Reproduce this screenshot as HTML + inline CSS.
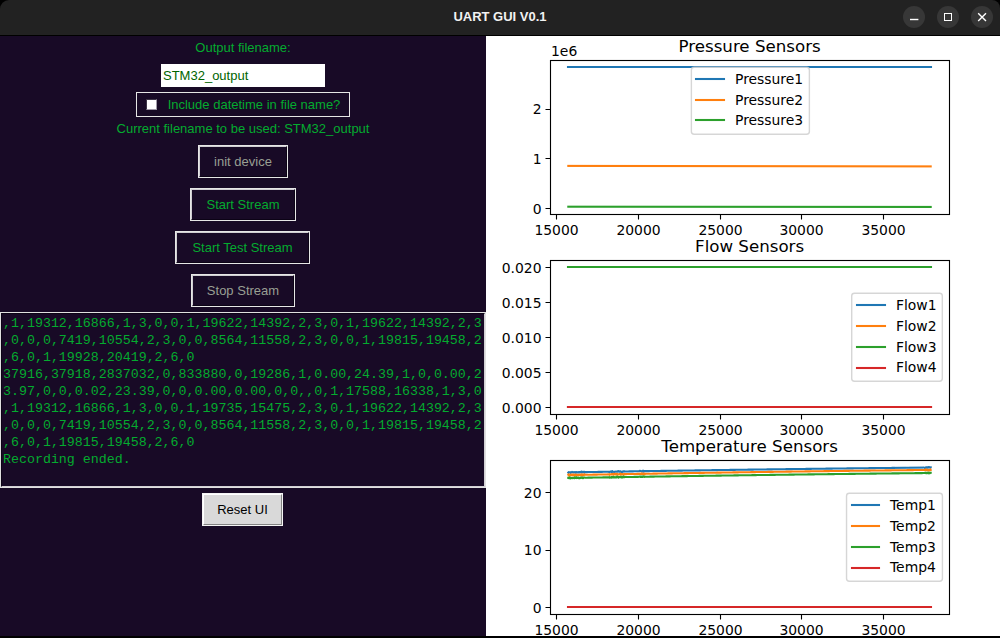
<!DOCTYPE html>
<html><head><meta charset="utf-8"><title>UART GUI V0.1</title>
<style>
html,body{margin:0;padding:0;background:#000;}
body{width:1000px;height:638px;overflow:hidden;position:relative;font-family:"Liberation Sans",sans-serif;font-size:13px;line-height:16px;color:#04ab2f;}
#win{position:absolute;left:0;top:0;width:1000px;height:638px;background:#000;overflow:hidden;}
#tb{position:absolute;left:0;top:0;width:1000px;height:35px;background:#222222;border-radius:9px 8px 0 0;}
.wb{position:absolute;top:6px;width:22px;height:22px;border-radius:11px;background:#373737;}
#left{position:absolute;left:0;top:36px;width:486px;height:600px;background:#180a26;}
#figw{position:absolute;left:486px;top:36px;width:514px;height:600px;background:#fff;}
.abs{position:absolute;box-sizing:border-box;}
.btn{position:absolute;box-sizing:border-box;border:1px solid #e6e6e6;}
.btn:after{content:"";position:absolute;left:0;top:0;right:0;bottom:0;border:1px solid;border-color:#cfcdd2 #0c0316 #0c0316 #cfcdd2;}
#ov{position:absolute;left:0;top:0;}
.t{position:absolute;white-space:pre;overflow:hidden;text-align:center;}
pre.t{margin:0;font-family:"Liberation Mono",monospace;font-size:13.3px;line-height:17px;text-align:left;}
</style></head><body>
<div id="win">
<div id="tb"><div class="t" style="left:440px;top:9px;width:120px;height:16px;color:#f2f2f2;font-weight:bold">UART GUI V0.1</div></div>
<div class="wb" style="left:903px"></div><div class="wb" style="left:937px"></div><div class="wb" style="left:971px"></div>
<div id="left"></div>
<div class="t" style="left:180px;top:40px;width:126px;height:16px">Output filename:</div>
<div class="abs" style="left:161px;top:64px;width:164px;height:23px;background:#fff;"><div class="t" style="left:2px;top:4px;width:120px;height:16px;text-align:left;color:#006400">STM32_output</div></div>
<div class="abs" style="left:136px;top:92px;width:214px;height:25px;border:1px solid #e6e6e6;"><div class="t" style="left:24px;top:4px;width:186px;height:16px">Include datetime in file name?</div></div>
<div class="abs" style="left:146px;top:99px;width:11px;height:11px;background:#fff;border:1px solid;border-color:#3c3446 #a09aa8 #a09aa8 #3c3446"></div>
<div class="t" style="left:100px;top:121px;width:286px;height:16px">Current filename to be used: STM32_output</div>
<div class="btn" style="left:198px;top:145px;width:90px;height:33px"></div><div class="t" style="left:198px;top:154px;width:90px;height:16px;color:#999f93">init device</div>
<div class="btn" style="left:190px;top:188px;width:106px;height:33px"></div><div class="t" style="left:190px;top:197px;width:106px;height:16px">Start Stream</div>
<div class="btn" style="left:175px;top:231px;width:135px;height:33px"></div><div class="t" style="left:175px;top:240px;width:135px;height:16px">Start Test Stream</div>
<div class="btn" style="left:191px;top:274px;width:104px;height:33px"></div><div class="t" style="left:191px;top:283px;width:104px;height:16px;color:#999f93">Stop Stream</div>
<div class="abs" style="left:0;top:312px;width:486px;height:176px;border:1px solid #e0e0e0;"><div class="abs" style="left:0;top:0;right:0;bottom:0;border:1px solid;border-color:#0c0316 #d2d0d4 #d2d0d4 #0c0316"></div><pre class="t" style="left:2px;top:2px;width:480px;height:170px">,1,19312,16866,1,3,0,0,1,19622,14392,2,3,0,1,19622,14392,2,3
,0,0,0,7419,10554,2,3,0,0,8564,11558,2,3,0,0,1,19815,19458,2
,6,0,1,19928,20419,2,6,0
37916,37918,2837032,0,833880,0,19286,1,0.00,24.39,1,0,0.00,2
3.97,0,0,0.02,23.39,0,0,0.00,0.00,0,0,,0,1,17588,16338,1,3,0
,1,19312,16866,1,3,0,0,1,19735,15475,2,3,0,1,19622,14392,2,3
,0,0,0,7419,10554,2,3,0,0,8564,11558,2,3,0,0,1,19815,19458,2
,6,0,1,19815,19458,2,6,0
Recording ended.</pre></div>
<div class="abs" style="left:202px;top:493px;width:81px;height:33px;background:#d9d9d9;border:1px solid #f4f4f4;"><div class="abs" style="left:0;top:0;right:0;bottom:0;border:1px solid;border-color:#fff #828282 #828282 #fff"></div><div class="t" style="left:0px;top:8px;width:79px;height:16px;color:#000">Reset UI</div></div>
<div id="figw"></div>
<svg id="ov" width="1000" height="638" viewBox="0 0 1000 638">
<g stroke="#fff" fill="none">
<path d="M910 19.5H918.4" stroke-width="1.4"/>
<rect x="944.5" y="13.5" width="7" height="7" stroke-width="1"/>
<path d="M978.2 13.2L986 21M986 13.2L978.2 21" stroke-width="1.4"/>
</g>
<clipPath id="c0"><rect x="550.29" y="60.25" width="398.58" height="154"/></clipPath>
<g clip-path="url(#c0)" fill="none" stroke-width="2.08" stroke-linecap="square" stroke-linejoin="round"><path d="M568 67H931" stroke="#1f77b4"/><g stroke="none"><linearGradient id="gl0_1_164" gradientUnits="userSpaceOnUse" x1="567.26" y1="0" x2="931.74" y2="0"><stop offset="0.00000" stop-color="#ff7f0e" stop-opacity="0.143"/><stop offset="0.28457" stop-color="#ff7f0e" stop-opacity="0.000"/><stop offset="1.00000" stop-color="#ff7f0e" stop-opacity="0.000"/></linearGradient><rect x="567.26" y="164" width="364.48" height="1" fill="url(#gl0_1_164)"/><linearGradient id="gl0_1_165" gradientUnits="userSpaceOnUse" x1="567.26" y1="0" x2="931.74" y2="0"><stop offset="0.00000" stop-color="#ff7f0e" stop-opacity="1.000"/><stop offset="0.28457" stop-color="#ff7f0e" stop-opacity="1.000"/><stop offset="1.00000" stop-color="#ff7f0e" stop-opacity="0.640"/></linearGradient><rect x="567.26" y="165" width="364.48" height="1" fill="url(#gl0_1_165)"/><linearGradient id="gl0_1_166" gradientUnits="userSpaceOnUse" x1="567.26" y1="0" x2="931.74" y2="0"><stop offset="0.00000" stop-color="#ff7f0e" stop-opacity="0.940"/><stop offset="0.11886" stop-color="#ff7f0e" stop-opacity="1.000"/><stop offset="1.00000" stop-color="#ff7f0e" stop-opacity="1.000"/></linearGradient><rect x="567.26" y="166" width="364.48" height="1" fill="url(#gl0_1_166)"/><linearGradient id="gl0_1_167" gradientUnits="userSpaceOnUse" x1="567.26" y1="0" x2="931.74" y2="0"><stop offset="0.00000" stop-color="#ff7f0e" stop-opacity="0.000"/><stop offset="0.11886" stop-color="#ff7f0e" stop-opacity="0.000"/><stop offset="1.00000" stop-color="#ff7f0e" stop-opacity="0.443"/></linearGradient><rect x="567.26" y="167" width="364.48" height="1" fill="url(#gl0_1_167)"/></g><g stroke="none"><linearGradient id="gl0_2_205" gradientUnits="userSpaceOnUse" x1="567.26" y1="0" x2="931.74" y2="0"><stop offset="0.00000" stop-color="#2ca02c" stop-opacity="0.342"/><stop offset="1.00000" stop-color="#2ca02c" stop-opacity="0.091"/></linearGradient><rect x="567.26" y="205" width="364.48" height="1" fill="url(#gl0_2_205)"/><rect x="567.26" y="206" width="364.48" height="1" fill="#2ca02c" fill-opacity="1.000"/><linearGradient id="gl0_2_207" gradientUnits="userSpaceOnUse" x1="567.26" y1="0" x2="931.74" y2="0"><stop offset="0.00000" stop-color="#2ca02c" stop-opacity="0.741"/><stop offset="1.00000" stop-color="#2ca02c" stop-opacity="0.992"/></linearGradient><rect x="567.26" y="207" width="364.48" height="1" fill="url(#gl0_2_207)"/></g></g>
<path d="M556.5 214.5v5M638.5 214.5v5M720.5 214.5v5M801.5 214.5v5M883.5 214.5v5M550.5 208.5h-5M550.5 158.5h-5M550.5 109.5h-5" stroke="#000" stroke-width="1.11" fill="none"/>
<rect x="550.5" y="60.5" width="399" height="154" fill="none" stroke="#000" stroke-width="1.11"/>
<rect x="691.38" y="67.19" width="118" height="67" rx="2.78" ry="2.78" fill="#fff" fill-opacity="0.8" stroke="#ccc" stroke-opacity="0.8" stroke-width="1.39"/>
<g fill="none" stroke-width="2.08" stroke-linecap="square"><path d="M696 79H724" stroke="#1f77b4"/><path d="M696 100H724" stroke="#ff7f0e"/><path d="M696 120H724" stroke="#2ca02c"/></g>
<clipPath id="c1"><rect x="550.29" y="260.25" width="398.58" height="154"/></clipPath>
<g clip-path="url(#c1)" fill="none" stroke-width="2.08" stroke-linecap="square" stroke-linejoin="round"><path d="M568 407H931" stroke="#1f77b4"/><path d="M568 407H931" stroke="#ff7f0e"/><path d="M568 267H931" stroke="#2ca02c"/><path d="M568 407H931" stroke="#d62728"/></g>
<path d="M556.5 414.5v5M638.5 414.5v5M720.5 414.5v5M801.5 414.5v5M883.5 414.5v5M550.5 407.5h-5M550.5 372.5h-5M550.5 337.5h-5M550.5 302.5h-5M550.5 267.5h-5" stroke="#000" stroke-width="1.11" fill="none"/>
<rect x="550.5" y="260.5" width="399" height="154" fill="none" stroke="#000" stroke-width="1.11"/>
<rect x="851.7" y="293.28" width="90.62" height="87.94" rx="2.78" ry="2.78" fill="#fff" fill-opacity="0.8" stroke="#ccc" stroke-opacity="0.8" stroke-width="1.39"/>
<g fill="none" stroke-width="2.08" stroke-linecap="square"><path d="M857 305H885" stroke="#1f77b4"/><path d="M857 326H885" stroke="#ff7f0e"/><path d="M857 347H885" stroke="#2ca02c"/><path d="M857 368H885" stroke="#d62728"/></g>
<clipPath id="c2"><rect x="550.29" y="460.25" width="398.58" height="154"/></clipPath>
<g clip-path="url(#c2)" fill="none" stroke-width="2.08" stroke-linecap="square" stroke-linejoin="round"><path d="M567.63 471.77 568.55 472.87 568.8 472.22 569.05 472.22 569.3 472.2 569.55 472.2 569.8 472.19 570.05 472.2 570.3 472.2 570.55 472.19 570.8 472.83 571.05 472.18 571.3 472.18 571.55 472.18 571.8 472.16 572.05 471.82 572.3 472.16 572.55 472.15 572.8 472.49 573.05 472.49 573.3 472.49 573.55 472.44 573.8 472.14 574.05 472.47 574.3 472.47 574.55 472.46 574.8 472.12 575.05 472.46 575.3 472.45 575.55 472.45 575.8 472.74 576.05 472.1 576.3 472.44 576.55 472.09 576.8 472.09 577.05 472.42 577.3 472.38 577.55 472.41 577.8 472.41 578.05 472.07 578.3 472.06 578.55 472.4 578.8 472.39 579.05 472.05 579.3 472.39 579.55 472.04 579.8 472.38 580.05 472.33 580.3 472.03 580.55 472.02 580.8 472.02 581.05 472.36 581.3 471.66 581.55 472.35 581.8 472.34 582.05 471.65 582.3 472 582.55 471.99 582.8 471.98 583.05 472.32 583.3 472.32 583.55 471.97 583.8 472.31 584.05 471.96 584.3 472.3 584.55 471.96 584.8 472.29 585.05 472.12 586.05 472.1 587.05 472.09 588.05 472.07 589.05 472.05 590.05 472.04 591.05 472.02 592.05 472 593.05 471.99 594.05 471.97 595.05 471.95 596.05 471.94 597.05 471.92 598.05 471.91 599.05 471.89 600.05 471.87 601.05 471.86 602.05 471.84 603.05 471.82 604.05 471.81 605.05 471.79 606.05 471.78 607.05 471.76 608.05 471.74 609.05 471.9 609.3 472.19 609.55 471.89 609.8 471.88 610.05 471.84 610.3 471.54 610.55 471.52 610.8 471.53 611.05 471.82 611.3 471.52 611.55 471.86 611.8 472.15 612.05 471.51 612.3 471.15 612.55 471.84 612.8 471.5 613.05 471.83 613.3 471.83 613.55 471.82 613.8 471.82 614.05 472.12 614.3 471.81 614.55 471.81 614.8 471.8 615.05 471.45 615.3 471.46 615.55 471.79 615.8 471.79 616.05 471.78 616.3 471.78 616.55 471.44 616.8 471.43 617.05 471.43 617.3 471.42 617.55 471.76 617.8 471.41 618.05 471.41 618.3 471.06 618.55 471.39 618.8 471.74 619.05 471.4 619.3 471.39 619.55 471.69 619.8 471.68 620.05 471.72 620.3 471.37 620.55 471.37 620.8 471.37 621.05 471.7 621.3 472 621.55 471.7 621.8 471.69 622.05 471.69 622.3 471.98 622.55 471.68 622.8 471.68 623.05 471.33 623.3 471.33 623.55 471.31 623.8 471.66 624.05 471.31 624.3 471.31 624.55 471.3 624.8 471.3 625.05 471.47 626.05 471.46 627.05 471.44 628.05 471.42 629.05 471.41 630.05 471.39 631.05 471.38 632.05 471.36 633.05 471.34 634.05 471.33 635.05 471.31 636.05 471.3 637.05 471.28 638.05 471.27 639.05 471.25 640.05 470.72 640.3 471.06 640.55 471.06 640.8 471.05 641.05 471.05 641.3 471.04 641.55 471.38 641.8 471.38 642.05 471.37 642.3 471.37 642.55 471.03 642.8 471.02 643.05 470.67 643.3 471.35 643.55 471.65 643.8 471.35 644.05 470.99 644.3 470.99 644.55 470.99 644.8 470.99 645.05 471.16 646.05 471.14 647.05 471.13 648.05 471.11 649.05 471.1 650.05 471.08 651.05 471.07 652.05 471.05 653.05 471.03 654.05 471.02 655.05 471 656.05 470.99 657.05 470.97 658.05 470.96 659.05 470.94 660.05 470.93 661.05 470.91 662.05 470.9 663.05 470.88 664.05 470.87 665.05 470.85 666.05 470.84 667.05 470.82 668.05 470.81 669.05 470.79 670.05 470.78 671.05 470.76 672.05 470.75 673.05 470.73 674.05 470.72 675.05 470.7 676.05 470.69 677.05 470.67 678.05 470.66 679.05 470.64 680.05 470.63 681.05 470.61 682.05 470.6 683.05 470.58 684.05 470.57 685.05 470.55 686.05 470.54 687.05 470.52 688.05 470.51 689.05 470.5 690.05 470.48 691.05 470.47 692.05 470.45 693.05 470.44 694.05 470.42 695.05 470.41 696.05 470.39 697.05 470.38 698.05 470.36 699.05 470.35 700.05 470.34 701.05 470.32 702.05 470.31 703.05 470.29 704.05 470.28 705.05 470.26 706.05 470.25 707.05 470.23 708.05 470.22 709.05 470.21 710.05 470.19 711.05 470.18 712.05 470.16 713.05 470.15 714.05 470.13 715.05 470.12 716.05 470.11 717.05 470.09 718.05 470.08 719.05 470.06 720.05 470.05 721.05 470.04 722.05 470.02 723.05 470.01 724.05 469.99 725.05 469.98 726.05 469.97 727.05 469.95 728.05 469.94 729.05 469.92 730.05 469.91 731.05 469.9 732.05 469.88 733.05 469.87 734.05 469.85 735.05 469.84 736.05 469.83 737.05 469.81 738.05 469.8 739.05 469.79 740.05 469.77 741.05 469.76 742.05 469.74 743.05 469.73 744.05 469.72 745.05 469.7 746.05 469.69 747.05 469.68 748.05 469.66 749.05 469.65 750.05 469.64 751.05 469.62 752.05 469.61 753.05 469.6 754.05 469.58 755.05 469.57 756.05 469.56 757.05 469.54 758.05 469.53 759.05 469.52 760.05 469.5 761.05 469.49 762.05 469.48 763.05 469.46 764.05 469.45 765.05 469.44 766.05 469.42 767.05 469.41 768.05 469.4 769.05 469.38 770.05 469.37 771.05 469.36 772.05 469.34 773.05 469.33 774.05 469.32 775.05 469.3 776.05 469.29 777.05 469.28 778.05 469.27 779.05 469.25 780.05 469.24 781.05 469.23 782.05 469.21 783.05 469.2 784.05 469.19 785.05 469.17 786.05 469.16 787.05 469.15 788.05 469.14 789.05 469.12 790.05 469.11 791.05 469.1 792.05 469.09 793.05 469.07 794.05 469.06 795.05 469.05 796.05 469.03 797.05 469.02 798.05 469.01 799.05 469 800.05 468.98 801.05 468.97 802.05 468.96 803.05 468.95 804.05 468.93 805.05 468.92 806.05 468.91 807.05 468.9 808.05 468.88 809.05 468.87 810.05 468.86 811.05 468.85 812.05 468.83 813.05 468.82 814.05 468.81 815.05 468.8 816.05 468.79 817.05 468.77 818.05 468.76 819.05 468.75 820.05 468.74 821.05 468.72 822.05 468.71 823.05 468.7 824.05 468.69 825.05 468.68 826.05 468.66 827.05 468.65 828.05 468.64 829.05 468.63 830.05 468.62 831.05 468.6 832.05 468.59 833.05 468.58 834.05 468.57 835.05 468.56 836.05 468.54 837.05 468.53 838.05 468.52 839.05 468.51 840.05 468.5 841.05 468.48 842.05 468.47 843.05 468.46 844.05 468.45 845.05 468.44 846.05 468.43 847.05 468.41 848.05 468.4 849.05 468.39 850.05 468.38 851.05 468.37 852.05 468.36 853.05 468.34 854.05 468.33 855.05 468.32 856.05 468.31 857.05 468.3 858.05 468.29 859.05 468.27 860.05 468.26 861.05 468.25 862.05 468.24 863.05 468.23 864.05 468.22 865.05 468.21 866.05 468.19 867.05 468.18 868.05 468.17 869.05 468.16 870.05 468.15 871.05 468.14 872.05 468.13 873.05 468.12 874.05 468.1 875.05 468.09 876.05 468.08 877.05 468.07 878.05 468.06 879.05 468.05 880.05 468.04 881.05 468.03 882.05 468.02 883.05 468 884.05 467.99 885.05 467.98 886.05 467.97 887.05 467.96 888.05 467.95 889.05 467.94 890.05 467.93 891.05 467.92 892.05 467.91 893.05 467.9 894.05 467.88 895 467.87" stroke="#1f77b4" stroke-linecap="butt"/><g stroke="none"><linearGradient id="gm2_0_0_466" gradientUnits="userSpaceOnUse" x1="895" y1="0" x2="906" y2="0"><stop offset="0.00000" stop-color="#1f77b4" stop-opacity="0.171"/><stop offset="1.00000" stop-color="#1f77b4" stop-opacity="0.281"/></linearGradient><rect x="895" y="466" width="11" height="1" fill="url(#gm2_0_0_466)"/><rect x="895" y="467" width="11" height="1" fill="#1f77b4" fill-opacity="1.000"/><linearGradient id="gm2_0_0_468" gradientUnits="userSpaceOnUse" x1="895" y1="0" x2="906" y2="0"><stop offset="0.00000" stop-color="#1f77b4" stop-opacity="0.912"/><stop offset="1.00000" stop-color="#1f77b4" stop-opacity="0.802"/></linearGradient><rect x="895" y="468" width="11" height="1" fill="url(#gm2_0_0_468)"/></g><path d="M906 467.76 907.05 467.75 908.05 467.73 909 467.72" stroke="#1f77b4" stroke-linecap="butt"/><g stroke="none"><linearGradient id="gm2_0_1_466" gradientUnits="userSpaceOnUse" x1="909" y1="0" x2="923" y2="0"><stop offset="0.00000" stop-color="#1f77b4" stop-opacity="0.321"/><stop offset="1.00000" stop-color="#1f77b4" stop-opacity="0.461"/></linearGradient><rect x="909" y="466" width="14" height="1" fill="url(#gm2_0_1_466)"/><rect x="909" y="467" width="14" height="1" fill="#1f77b4" fill-opacity="1.000"/><linearGradient id="gm2_0_1_468" gradientUnits="userSpaceOnUse" x1="909" y1="0" x2="923" y2="0"><stop offset="0.00000" stop-color="#1f77b4" stop-opacity="0.762"/><stop offset="1.00000" stop-color="#1f77b4" stop-opacity="0.622"/></linearGradient><rect x="909" y="468" width="14" height="1" fill="url(#gm2_0_1_468)"/></g><path d="M923 467.58 924.05 467.57 925.05 468.03 925.3 467.73 925.55 467.72 925.8 467.38 926.05 467.72 926.3 467.36 926.55 467.36 926.8 467.37 927.05 467.71 927.3 467.36 927.55 467.66 927.8 467.7 928.05 467.7 928.3 467 928.55 467.35 928.8 467.35 929.05 467.35 929.3 466.99 929.55 467.34 929.8 467.34 930.05 467.68 930.3 467.63 930.55 467.33 931.74 467.33" stroke="#1f77b4" stroke-linecap="butt"/><path d="M567.95 473.6 568.55 475.27 568.8 475.56 569.05 475.26 569.3 475.21 569.55 475.55 569.8 474.55 570.05 474.9 570.3 475.23 570.55 475.23 570.8 475.23 571.05 474.88 571.3 474.53 571.55 474.87 571.8 475.21 572.05 474.86 572.3 475.2 572.55 475.19 572.8 474.5 573.05 474.85 573.3 474.49 573.55 475.18 573.8 474.83 574.05 474.83 574.3 474.81 574.55 475.46 574.8 474.81 575.05 474.81 575.3 475.14 575.55 474.45 575.8 474.45 576.05 474.79 576.3 475.43 576.55 475.12 576.8 474.78 577.05 474.77 577.3 475.11 577.55 475.1 577.8 474.76 578.05 475.1 578.3 474.75 578.55 475.09 578.8 474.74 579.05 475.08 579.3 475.03 579.55 475.07 579.8 474.73 580.05 475.06 580.3 475.06 580.55 474.71 580.8 475.05 581.05 474.7 581.3 475 581.55 474.69 581.8 475.03 582.05 474.34 582.3 475.02 582.55 474.68 582.8 475.31 583.05 475.01 583.3 474.66 583.55 475 583.8 474.99 584.05 474.99 584.3 474.99 584.55 474.29 584.8 474.64 585.05 474.8 586.05 474.78 587.05 474.77 588.05 474.75 589.05 474.73 590.05 474.71 591.05 474.7 592.05 474.68 593.05 474.66 594.05 474.64 595.05 474.63 596.05 474.61 597.05 474.59 598.05 474.58 599.05 474.56 600.05 474.54 601.05 474.52 602.05 474.51 603.05 474.49 604.05 474.47 605.05 474.45 606.05 474.44 607.05 474.42 608.05 474.4 609.05 474.22 609.3 474.2 609.55 474.85 609.8 474.19 610.05 474.2 610.3 474.53 610.55 474.49 610.8 474.53 611.05 474.52 611.3 474.18 611.55 474.47 611.8 474.51 612.05 474.16 612.3 474.5 612.55 474.16 612.8 474.49 613.05 474.15 613.3 473.79 613.55 474.78 613.8 474.47 614.05 474.13 614.3 474.12 614.55 474.12 614.8 474.12 615.05 473.76 615.3 474.45 615.55 474.44 615.8 473.75 616.05 474.1 616.3 474.09 616.55 474.09 616.8 474.42 617.05 473.73 617.3 474.71 617.55 474.07 617.8 474.07 618.05 474.4 618.3 474.4 618.55 474.35 618.8 474.39 619.05 474.39 619.3 474.04 619.55 474.04 619.8 474.02 620.05 474.37 620.3 474.01 620.55 474.66 620.8 473.67 621.05 474.01 621.3 474.35 621.55 474.34 621.8 474 622.05 473.99 622.3 474.33 622.55 474.33 622.8 473.98 623.05 474.62 623.3 474.61 623.55 474.61 623.8 473.97 624.05 473.96 624.3 474.3 624.55 473.95 624.8 473.95 625.05 474.11 626.05 474.1 627.05 474.08 628.05 474.06 629.05 474.05 630.05 474.03 631.05 474.01 632.05 474 633.05 473.98 634.05 473.96 635.05 473.95 636.05 473.93 637.05 473.91 638.05 473.9 639.05 473.88 640.05 474.03 640.3 473.69 640.55 474.03 640.8 473.67 641.05 473.68 641.3 474.01 641.55 473.67 641.8 473.97 642.05 473.66 642.3 474 642.55 473.65 642.8 473.65 643.05 473.98 643.3 473.94 643.55 474.28 643.8 473.97 644.05 473.63 644.3 473.96 644.55 473.62 644.8 474.26 645.05 473.78 646.05 473.77 647.05 473.75 648.05 473.73 649.05 473.72 650.05 473.7 651.05 473.68 652.05 473.67 653.05 473.65 654.05 473.63 655.05 473.62 656.05 473.6 657.05 473.59 658.05 473.57 659.05 473.55 660.05 473.54 661.05 473.52 662.05 473.51 663.05 473.49 664.05 473.47 665.05 473.46 666.05 473.44 667.05 473.43 668.05 473.41 669.05 473.39 670.05 473.38 671.05 473.36 672.05 473.35 673.05 473.33 674.05 473.31 675.05 473.3 676.05 473.28 677.05 473.27 678.05 473.25 679.05 473.23 680.05 473.22 681.05 473.2 682.05 473.19 683.05 473.17 684.05 473.16 685.05 473.14 686.05 473.13 687.05 473.11 688.05 473.09 689.05 473.08 690.05 473.06 691.05 473.05 692.05 473.03 693.05 473.02 694.05 473 695.05 472.99 696.05 472.97 697.05 472.95 698.05 472.94 699.05 472.92 700.05 472.91 701.05 472.89 702.05 472.88 703.05 472.86 704.05 472.85 705.05 472.83 706.05 472.82 707.05 472.8 708.05 472.79 709.05 472.77 710.05 472.76 711.05 472.74 712.05 472.73 713.05 472.71 714.05 472.7 715.05 472.68 716.05 472.67 717.05 472.65 718.05 472.64 719.05 472.62 720.05 472.61 721.05 472.59 722.05 472.58 723.05 472.56 724.05 472.55 725.05 472.53 726.05 472.52 727.05 472.5 728.05 472.49 729.05 472.47 730.05 472.46 731.05 472.44 732.05 472.43 733.05 472.41 734.05 472.4 735.05 472.38 736.05 472.37 737.05 472.36 738.05 472.34 739.05 472.33 740.05 472.31 741.05 472.3 742.05 472.28 743.05 472.27 744.05 472.25 745.05 472.24 746.05 472.22 747.05 472.21 748.05 472.2 749.05 472.18 750.05 472.17 751.05 472.15 752.05 472.14 753.05 472.12 754.05 472.11 755.05 472.1 756.05 472.08 757.05 472.07 758.05 472.05 759.05 472.04 760.05 472.02 761.05 472.01 762.05 472 763.05 471.98 764.05 471.97 765.05 471.95 766.05 471.94 767.05 471.93 768.05 471.91 769.05 471.9 770.05 471.88 771.05 471.87 772.05 471.86 773.05 471.84 774.05 471.83 775.05 471.81 776.05 471.8 777.05 471.79 778.05 471.77 779.05 471.76 780.05 471.75 781.05 471.73 782.05 471.72 783.05 471.7 784.05 471.69 785.05 471.68 786.05 471.66 787.05 471.65 788.05 471.64 789.05 471.62 790.05 471.61 791.05 471.6 792.05 471.58 793.05 471.57 794.05 471.56 795.05 471.54 796.05 471.53 797.05 471.52 798.05 471.5 799.05 471.49 800.05 471.47 801.05 471.46 802.05 471.45 803.05 471.44 804.05 471.42 805.05 471.41 806.05 471.4 807.05 471.38 808.05 471.37 809.05 471.36 810.05 471.34 811.05 471.33 812.05 471.32 813.05 471.3 814.05 471.29 815.05 471.28 816.05 471.26 817.05 471.25 818.05 471.24 819.05 471.22 820.05 471.21 821.05 471.2 822.05 471.19 823.05 471.17 824.05 471.16 825.05 471.15 826.05 471.13 827.05 471.12 828.05 471.11 829.05 471.1 830.05 471.08 831.05 471.07 832.05 471.06 833.05 471.05 834.05 471.03 835.05 471.02 836.05 471.01 837.05 470.99 838.05 470.98 839.05 470.97 840.05 470.96 841.05 470.94 842.05 470.93 843.05 470.92 844.05 470.91 845.05 470.89 846.05 470.88 847.05 470.87 848.05 470.86 849.05 470.84 850.05 470.83 851.05 470.82 852.05 470.81 853.05 470.8 854.05 470.78 855.05 470.77 856.05 470.76 857.05 470.75 858.05 470.73 859.05 470.72 860.05 470.71 861.05 470.7 862.05 470.69 863.05 470.67 864.05 470.66 865.05 470.65 866.05 470.64 867.05 470.63 868.05 470.61 869.05 470.6 870.05 470.59 871.05 470.58 872.05 470.57 873.05 470.55 874.05 470.54 875.05 470.53 876.05 470.52 877.05 470.51 878.05 470.49 879.05 470.48 880.05 470.47 881.05 470.46 882.05 470.45 883.05 470.44 884.05 470.42 885.05 470.41 886.05 470.4 887.05 470.39 888.05 470.38 889.05 470.37 890.05 470.35 891.05 470.34 892.05 470.33 893.05 470.32 894.05 470.31 895.05 470.3 896.05 470.28 897.05 470.27 898.05 470.26 899.05 470.25 900.05 470.24 901.05 470.23 902.05 470.22 903.05 470.21 904.05 470.19 905.05 470.18 906.05 470.17 907.05 470.16 908.05 470.15 909.05 470.14 910.05 470.13 911.05 470.12 912.05 470.1 913.05 470.09 914.05 470.08 915.05 470.07 916.05 470.06 917.05 470.05 918.05 470.04 919.05 470.03 920.05 470.02 921.05 470 922.05 469.99 923.05 469.98 924.05 469.97 925.05 469.79 925.3 470.13 925.55 469.79 925.8 469.43 926.05 470.12 926.3 470.12 926.55 470.11 926.8 470.07 927.05 469.76 927.3 470.11 927.55 470.1 927.8 469.76 928.05 470.1 928.3 470.4 928.55 470.09 928.8 470.09 929.05 469.75 929.3 470.09 929.55 470.38 929.8 469.74 930.05 470.38 930.3 469.73 930.55 469.38 930.92 471.09" stroke="#ff7f0e" stroke-linecap="butt"/><path d="M567.26 477.87 568.55 477.82 568.8 478.16 569.05 478.16 569.3 477.81 569.55 477.81 569.8 477.45 570.05 477.8 570.3 478.44 570.55 477.78 570.8 478.13 571.05 478.12 571.3 478.12 571.55 477.77 571.8 477.77 572.05 477.77 572.3 477.76 572.55 478.1 572.8 478.09 573.05 477.75 573.3 477.74 573.55 477.73 573.8 477.74 574.05 478.07 574.3 477.73 574.55 477.37 574.8 478.06 575.05 477.71 575.3 477.71 575.55 477.71 575.8 477.35 576.05 477.7 576.3 478.03 576.55 477.34 576.8 477.68 577.05 477.68 577.3 478.02 577.55 478.01 577.8 477.67 578.05 477.96 578.3 477.65 578.55 477.99 578.8 477.99 579.05 478.29 579.3 477.98 579.55 477.98 579.8 478.27 580.05 477.62 580.3 477.62 580.55 477.96 580.8 477.62 581.05 477.95 581.3 477.91 581.55 477.6 581.8 477.25 582.05 477.59 582.3 477.93 582.55 477.59 582.8 478.22 583.05 477.92 583.3 477.57 583.55 477.91 583.8 477.56 584.05 477.56 584.3 477.56 584.55 477.55 584.8 477.55 585.05 477.71 586.05 477.7 587.05 477.68 588.05 477.66 589.05 477.65 590.05 477.63 591.05 477.61 592.05 477.6 593.05 477.58 594.05 477.56 595.05 477.55 596.05 477.53 597.05 477.51 598.05 477.5 599.05 477.48 600.05 477.46 601.05 477.45 602.05 477.43 603.05 477.41 604.05 477.4 605.05 477.38 606.05 477.36 607.05 477.35 608.05 477.33 609.05 477.48 609.3 477.14 609.55 477.47 609.8 477.77 610.05 477.47 610.3 477.46 610.55 477.46 610.8 477.45 611.05 477.1 611.3 477.75 611.55 477.1 611.8 477.1 612.05 477.39 612.3 477.43 612.55 477.43 612.8 477.42 613.05 476.73 613.3 477.07 613.55 477.41 613.8 477.07 614.05 477.06 614.3 477.4 614.55 477.39 614.8 477.05 615.05 477.38 615.3 477.34 615.55 477.38 615.8 477.33 616.05 477.03 616.3 477.36 616.55 476.67 616.8 477.36 617.05 477.01 617.3 476.66 617.55 477 617.8 476.99 618.05 477.34 618.3 477.63 618.55 476.99 618.8 476.98 619.05 476.98 619.3 476.98 619.55 476.97 619.8 477.31 620.05 477.3 620.3 476.96 620.55 477.29 620.8 477.29 621.05 477.29 621.3 476.94 621.55 477.24 621.8 476.93 622.05 477.57 622.3 477.27 622.55 477.26 622.8 477.26 623.05 477.25 623.3 476.56 623.55 477.25 623.8 477.24 624.05 477.24 624.3 477.23 624.55 477.23 624.8 476.89 625.05 477.05 626.05 477.04 627.05 477.02 628.05 477 629.05 476.99 630.05 476.97 631.05 476.96 632.05 476.94 633.05 476.92 634.05 476.91 635.05 476.89 636.05 476.88 637.05 476.86 638.05 476.84 639.05 476.83 640.05 476.64 640.3 476.98 640.55 476.63 640.8 476.63 641.05 476.97 641.3 476.62 641.55 476.62 641.8 476.95 642.05 476.61 642.3 476.95 642.55 476.6 642.8 476.94 643.05 476.24 643.3 476.59 643.55 476.59 643.8 476.58 644.05 476.58 644.3 476.57 644.55 476.91 644.8 476.57 645.05 476.73 646.05 476.72 647.05 476.7 648.05 476.69 649.05 476.67 650.05 476.65 651.05 476.64 652.05 476.62 653.05 476.61 654.05 476.59 655.05 476.58 656.05 476.56 657.05 476.54 658.05 476.53 659.05 476.51 660.05 476.5 661.05 476.48 662.05 476.47 663.05 476.45 664.05 476.44 665.05 476.42 666.05 476.41 667.05 476.39 668.05 476.37 669.05 476.36 670.05 476.34 671.05 476.33 672.05 476.31 673.05 476.3 674.05 476.28 675.05 476.27 676.05 476.25 677.05 476.24 678.05 476.22 679.05 476.21 680.05 476.19 681.05 476.18 682.05 476.16 683.05 476.15 684.05 476.13 685.05 476.12 686.05 476.1 687.05 476.09 688.05 476.07 689.05 476.06 690.05 476.04 691.05 476.03 692.05 476.01 693.05 476 694.05 475.98 695.05 475.97 696.05 475.95 697.05 475.94 698.05 475.92 699.05 475.91 700.05 475.89 701.05 475.88 702.05 475.86 703.05 475.85 704.05 475.83 705.05 475.82 706.05 475.8 707.05 475.79 708.05 475.78 709.05 475.76 710.05 475.75 711.05 475.73 712.05 475.72 713.05 475.7 714.05 475.69 715.05 475.67 716.05 475.66 717.05 475.65 718.05 475.63 719.05 475.62 720.05 475.6 721.05 475.59 722.05 475.57 723.05 475.56 724.05 475.54 725.05 475.53 726.05 475.52 727.05 475.5 728.05 475.49 729.05 475.47 730.05 475.46 731.05 475.45 732.05 475.43 733.05 475.42 734.05 475.4 735.05 475.39 736.05 475.37 737.05 475.36 738.05 475.35 739.05 475.33 740.05 475.32 741.05 475.3 742.05 475.29 743.05 475.28 744.05 475.26 745.05 475.25 746.05 475.24 747.05 475.22 748.05 475.21 749.05 475.19 750.05 475.18 751.05 475.17 752.05 475.15 753.05 475.14 754.05 475.12 755.05 475.11 756.05 475.1 757.05 475.08 758.05 475.07 759.05 475.06 760.05 475.04 761.05 475.03 762.05 475.02 763.05 475 764.05 474.99 765.05 474.98 766.05 474.96 767.05 474.95 768.05 474.93 769.05 474.92 770.05 474.91 771.05 474.89 772.05 474.88 773.05 474.87 774.05 474.85 775.05 474.84 776.05 474.83 777.05 474.81 778.05 474.8 779.05 474.79 780.05 474.77 781.05 474.76 782.05 474.75 783.05 474.74 784.05 474.72 785.05 474.71 786.05 474.7 787.05 474.68 788.05 474.67 789.05 474.66 790.05 474.64 791.05 474.63 792.05 474.62 793.05 474.6 794.05 474.59 795.05 474.58 796.05 474.57 797.05 474.55 798.05 474.54 799.05 474.53 800.05 474.51 801.05 474.5 802.05 474.49 803.05 474.48 804.05 474.46 805.05 474.45 806.05 474.44 807.05 474.43 808.05 474.41 809.05 474.4 810.05 474.39 811.05 474.37 812.05 474.36 813.05 474.35 814.05 474.34 815.05 474.32 816.05 474.31 817.05 474.3 818.05 474.29 819.05 474.27 820.05 474.26 821.05 474.25 822.05 474.24 823.05 474.22 824.05 474.21 825.05 474.2 826.05 474.19 827.05 474.17 828.05 474.16 829.05 474.15 830.05 474.14 831.05 474.13 832.05 474.11 833.05 474.1 834.05 474.09 835.05 474.08 836.05 474.06 837.05 474.05 838.05 474.04 839.05 474.03 840.05 474.02 841.05 474 842.05 473.99 843.05 473.98 844.05 473.97 845.05 473.96 846.05 473.94 847.05 473.93 848.05 473.92 849.05 473.91 850.05 473.9 851.05 473.88 852.05 473.87 853.05 473.86 854.05 473.85 855.05 473.84 856.05 473.83 857.05 473.81 858.05 473.8 859.05 473.79 860.05 473.78 861.05 473.77 862.05 473.76 863.05 473.74 864.05 473.73 865.05 473.72 866.05 473.71 867.05 473.7 868.05 473.69 869.05 473.67 870.05 473.66 871.05 473.65 872.05 473.64 873.05 473.63 874.05 473.62 875.05 473.61 876.05 473.59 877.05 473.58 878.05 473.57 879.05 473.56 880.05 473.55 881.05 473.54 882.05 473.53 883.05 473.51 884.05 473.5 885.05 473.49 886.05 473.48 887.05 473.47 888.05 473.46 889.05 473.45 890.05 473.44 891.05 473.43 892.05 473.41 893.05 473.4 894.05 473.39 895.05 473.38 896.05 473.37 897.05 473.36 898.05 473.35 899.05 473.34 900.05 473.33 901.05 473.32 902.05 473.3 903.05 473.29 904.05 473.28 905.05 473.27 906.05 473.26 907.05 473.25 908.05 473.24 909.05 473.23 910.05 473.22 911.05 473.21 912.05 473.2 913.05 473.19 914.05 473.17 915.05 473.16 916.05 473.15 917.05 473.14 918.05 473.13 919.05 473.12 920.05 473.11 921.05 473.1 922.05 473.09 923.05 473.08 924.05 473.07 925.05 472.89 925.3 472.89 925.55 472.88 925.8 473.22 926.05 472.88 926.3 473.22 926.55 473.21 926.8 473.21 927.05 472.87 927.3 473.21 927.55 472.86 927.8 472.86 928.05 472.51 928.3 472.84 928.55 473.15 928.8 473.49 929.05 472.85 929.3 472.84 929.55 472.83 929.8 473.18 930.05 473.18 930.3 472.83 930.55 472.83 931.74 472.83" stroke="#2ca02c" stroke-linecap="butt"/><path d="M568 607H931" stroke="#d62728"/></g>
<path d="M556.5 614.5v5M638.5 614.5v5M720.5 614.5v5M801.5 614.5v5M883.5 614.5v5M550.5 607.5h-5M550.5 550.5h-5M550.5 492.5h-5" stroke="#000" stroke-width="1.11" fill="none"/>
<rect x="550.5" y="460.5" width="399" height="154" fill="none" stroke="#000" stroke-width="1.11"/>
<rect x="846.55" y="493.28" width="95.88" height="87.94" rx="2.78" ry="2.78" fill="#fff" fill-opacity="0.8" stroke="#ccc" stroke-opacity="0.8" stroke-width="1.39"/>
<g fill="none" stroke-width="2.08" stroke-linecap="square"><path d="M852 505H879" stroke="#1f77b4"/><path d="M852 526H879" stroke="#ff7f0e"/><path d="M852 547H879" stroke="#2ca02c"/><path d="M852 568H879" stroke="#d62728"/></g>
<g fill="#000" font-family="'DejaVu Sans','Liberation Sans',sans-serif" font-size="13.9px">
<g text-anchor="middle">
<text x="556.5" y="235">15000</text><text x="638.5" y="235">20000</text><text x="720.5" y="235">25000</text><text x="801.5" y="235">30000</text><text x="883.5" y="235">35000</text>
<text x="556.5" y="435">15000</text><text x="638.5" y="435">20000</text><text x="720.5" y="435">25000</text><text x="801.5" y="435">30000</text><text x="883.5" y="435">35000</text>
<text x="556.5" y="635">15000</text><text x="638.5" y="635">20000</text><text x="720.5" y="635">25000</text><text x="801.5" y="635">30000</text><text x="883.5" y="635">35000</text>
</g>
<g text-anchor="end">
<text x="541.5" y="214">0</text><text x="541.5" y="164">1</text><text x="541.5" y="114">2</text>
<text x="541.5" y="413">0.000</text><text x="541.5" y="378">0.005</text><text x="541.5" y="343">0.010</text><text x="541.5" y="308">0.015</text><text x="541.5" y="273">0.020</text>
<text x="541.5" y="613">0</text><text x="541.5" y="555">10</text><text x="541.5" y="498">20</text>
</g>
<text x="551" y="56">1e6</text>
<text x="735" y="84">Pressure1</text><text x="735" y="105">Pressure2</text><text x="735" y="125">Pressure3</text>
<text x="896" y="310">Flow1</text><text x="896" y="331">Flow2</text><text x="896" y="352">Flow3</text><text x="896" y="372">Flow4</text>
<text x="890" y="510">Temp1</text><text x="890" y="531">Temp2</text><text x="890" y="552">Temp3</text><text x="890" y="572">Temp4</text>
<g font-size="16.67px" text-anchor="middle">
<text x="749.6" y="52">Pressure Sensors</text>
<text x="749.6" y="252">Flow Sensors</text>
<text x="749.6" y="452">Temperature Sensors</text>
</g>
</g>
</svg>
</div>
</body></html>
